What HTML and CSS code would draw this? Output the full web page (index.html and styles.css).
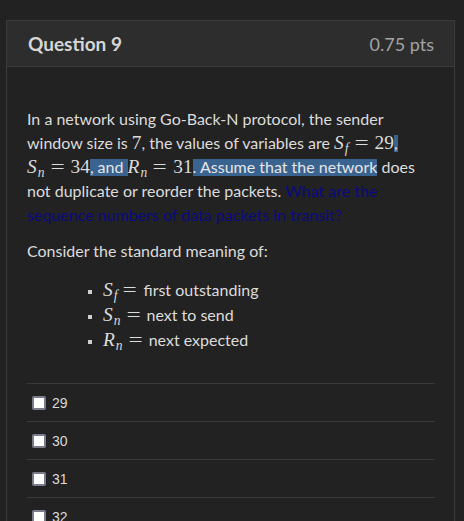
FILE: index.html
```html
<!DOCTYPE html>
<html>
<head>
<meta charset="utf-8">
<link rel="stylesheet" href="styles.css">
</head>
<body>
<div class="card">
  <div class="card-head">
    <h2 class="title">Question 9</h2>
    <span class="pts">0.75 pts</span>
  </div>
  <div class="card-body">
    <p class="para">In a network using Go-Back-N protocol, the sender window size is <span class="m">7</span>, the values of variables are <span class="m"><i>S</i><sub>f</sub><span class="eq">=</span>29</span><mark class="hl">,</mark> <span class="m"><i>S</i><sub>n</sub><span class="eq">=</span>34</span><mark class="hl">, and </mark><span class="m"><i>R</i><sub>n</sub><span class="eq">=</span>31</span><mark class="hl">. Assume that the network</mark> does not duplicate or reorder the packets. <span class="q">What are the sequence numbers of data packets in transit?</span></p>
    <p class="para">Consider the standard meaning of:</p>
    <ul class="defs">
      <li><span class="m"><i>S</i><sub>f</sub><span class="eq">=</span></span>first outstanding</li>
      <li><span class="m"><i>S</i><sub>n</sub><span class="eq">=</span></span>next to send</li>
      <li><span class="m"><i>R</i><sub>n</sub><span class="eq">=</span></span>next expected</li>
    </ul>
    <div class="answers">
      <label class="ans"><input class="box" type="checkbox"><span>29</span></label>
      <label class="ans"><input class="box" type="checkbox"><span>30</span></label>
      <label class="ans"><input class="box" type="checkbox"><span>31</span></label>
      <label class="ans"><input class="box" type="checkbox"><span>32</span></label>
      <label class="ans"><input class="box" type="checkbox"><span>33</span></label>
    </div>
  </div>
</div>
</body>
</html>
```

FILE: styles.css
```css
html, body {
  background: #222222;
}
body {
  margin: 20px 9px 0 6px;
  font-family: Lato, "Open Sans", sans-serif;
  color: #dcdcdc;
  overflow: hidden;
}
.card {
  border: 1px solid #3b3b3b;
  background: #222222;
}
.card-head {
  display: flex;
  justify-content: space-between;
  align-items: center;
  height: 45px;
  padding: 0 20px 0 21px;
  background: #2d2d2d;
  border-bottom: 1px solid #3b3b3b;
}
.title {
  margin: 0;
  font-size: 19px;
  font-weight: 700;
  color: #d6d6d6;
}
.pts {
  font-size: 18px;
  color: #a3a3a3;
}
.card-body {
  padding: 40px 19px 20px 20px;
}
.para {
  margin: 0 0 12px;
  font-size: 16px;
  line-height: 24px;
}
.m {
  font-family: "Liberation Serif", "Times New Roman", serif;
  font-size: 19.4px;
  white-space: nowrap;
}
.m i {
  font-style: italic;
  margin-right: 1px;
}
.m sub {
  font-style: italic;
  font-size: 0.7em;
  vertical-align: -0.3em;
  line-height: 0;
}
.eq {
  display: inline-block;
  width: 11px;
  text-align: center;
  margin: 0 8px 0 7px;
  transform: scaleX(1.3);
}
.hl {
  background: linear-gradient(transparent 2px, #3a6390 2px, #3a6390 19px, transparent 19px);
  color: #e6e6e6;
}
.q {
  color: #0a0a80;
}
.defs {
  margin: 14px 0 0;
  padding-left: 76px;
  list-style: square;
  font-size: 16px;
}
.defs li {
  line-height: 25px;
}
.defs li::marker {
  color: #cfcfcf;
  font-size: 13px;
}
.answers {
  margin-top: 31px;
}
.ans {
  display: flex;
  align-items: center;
  height: 37px;
  border-top: 1px solid #3a3a3a;
  font-family: "Liberation Sans", Arial, sans-serif;
  font-size: 14px;
  color: #dadada;
}
.box {
  appearance: none;
  -webkit-appearance: none;
  width: 14px;
  height: 14px;
  margin: 0 6px 0 5px;
  border: 2px solid #7a7c8c;
  border-radius: 2px;
  background: #ffffff;
}
```
